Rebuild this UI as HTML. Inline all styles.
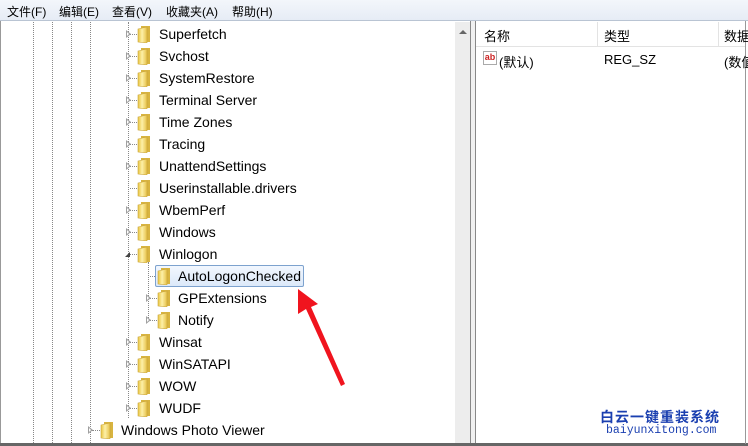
<!DOCTYPE html>
<html><head><meta charset="utf-8"><style>
*{margin:0;padding:0;box-sizing:border-box}
body{width:748px;height:446px;overflow:hidden;background:#fff;font-family:"Liberation Sans","Noto Sans CJK SC",sans-serif;position:relative}
.menu{position:absolute;left:0;top:0;width:748px;height:21px;background:linear-gradient(#f3f6fb,#e6ecf5);border-bottom:1px solid #b9c4d3;font-size:12px;color:#000}
.menu span{position:absolute;top:3px}
.t{position:absolute;font-size:14px;color:#000;white-space:nowrap}
.f{position:absolute;width:15px;height:18px}
.e{position:absolute;width:0;height:0;border-top:4px solid transparent;border-bottom:4px solid transparent;border-left:5px solid #a0a0a0}
.e:after{content:"";position:absolute;left:-4px;top:-2px;border-top:2px solid transparent;border-bottom:2px solid transparent;border-left:2px solid #fff}
.vl{position:absolute;width:0;border-left:1px dotted #888}
.hl{position:absolute;height:0;border-top:1px dotted #888}
</style></head><body>
<div class="menu"><span style="left:7px">文件(F)</span><span style="left:59px">编辑(E)</span><span style="left:112px">查看(V)</span><span style="left:166px">收藏夹(A)</span><span style="left:232px">帮助(H)</span></div>
<div style="position:absolute;left:0;top:21px;width:1px;height:423px;background:#999"></div>
<div style="position:absolute;left:455px;top:22px;width:15px;height:422px;background:#ededed"></div>
<div style="position:absolute;left:459px;top:30px;border-left:4px solid transparent;border-right:4px solid transparent;border-bottom:4px solid #666"></div>
<div style="position:absolute;left:470px;top:21px;width:1px;height:423px;background:#888"></div>
<div style="position:absolute;left:471px;top:21px;width:4px;height:423px;background:#f0f0f0"></div>
<div style="position:absolute;left:475px;top:21px;width:1px;height:423px;background:#888"></div>
<div style="position:absolute;left:0;top:443px;width:748px;height:3px;background:#666"></div>
<div style="position:absolute;left:745px;top:21px;width:1px;height:423px;background:#999"></div>
<div style="position:absolute;left:476px;top:46px;width:269px;height:1px;background:#e3e3e3"></div>
<div style="position:absolute;left:597px;top:22px;width:1px;height:24px;background:#e3e3e3"></div>
<div style="position:absolute;left:718px;top:22px;width:1px;height:24px;background:#e3e3e3"></div>
<div class="t" style="left:484px;top:26px;font-size:13px">名称</div>
<div class="t" style="left:604px;top:26px;font-size:13px">类型</div>
<div class="t" style="left:724px;top:26px;font-size:13px">数据</div>
<div style="position:absolute;left:483px;top:51px;width:14px;height:14px;border:1px solid #aaa;background:#fff;font-size:9px;font-weight:bold;color:#c22;line-height:11px;text-align:center">ab</div>
<div class="t" style="left:499px;top:52px;font-size:13px">(默认)</div>
<div class="t" style="left:604px;top:52px;font-size:13px">REG_SZ</div>
<div class="t" style="left:724px;top:52px;font-size:13px">(数值</div>
<div class="vl" style="left:33px;top:22px;height:421px"></div>
<div class="vl" style="left:52px;top:22px;height:421px"></div>
<div class="vl" style="left:71px;top:22px;height:421px"></div>
<div class="vl" style="left:90px;top:22px;height:421px"></div>
<div class="vl" style="left:128px;top:22px;height:396px"></div>
<div class="vl" style="left:148px;top:262px;height:58px"></div>
<svg width="0" height="0" style="position:absolute"><defs><linearGradient id="g" x1="0" x2="1"><stop offset="0" stop-color="#e8c440"/><stop offset=".45" stop-color="#fdf0a8"/><stop offset="1" stop-color="#e6c24a"/></linearGradient></defs></svg>
<div id="tree"></div>
<script>
var rows=[["Superfetch",0,1],["Svchost",0,1],["SystemRestore",0,1],["Terminal Server",0,1],["Time Zones",0,1],["Tracing",0,1],["UnattendSettings",0,1],["Userinstallable.drivers",0,0],["WbemPerf",0,1],["Windows",0,1],["Winlogon",0,2],["AutoLogonChecked",1,0],["GPExtensions",1,1],["Notify",1,1],["Winsat",0,1],["WinSATAPI",0,1],["WOW",0,1],["WUDF",0,1],["Windows Photo Viewer",-1,1]];
var h="";
rows.forEach(function(r,i){
var cy=34+i*22,ex,fx,tx;
if(r[1]==0){ex=128;fx=137;tx=159}else if(r[1]==1){ex=148;fx=157;tx=178}else{ex=90;fx=100;tx=121}
h+='<div class="hl" style="left:'+(ex+2)+'px;top:'+cy+'px;width:'+(fx-ex-2)+'px"></div>';
if(r[2]==1)h+='<div class="e" style="left:'+(ex-2)+'px;top:'+(cy-4)+'px"></div>';
if(r[2]==2)h+='<div style="position:absolute;left:'+(ex-3)+'px;top:'+(cy-2)+'px;border-left:5px solid transparent;border-bottom:5px solid #444"></div>';
if(i==11)h+='<div style="position:absolute;left:155px;top:'+(cy-11)+'px;width:149px;height:22px;border:1px solid #7da2ce;border-radius:2px;background:linear-gradient(#f2f7fe,#dce9f9)"></div>';
h+='<svg class="f" style="left:'+fx+'px;top:'+(cy-9)+'px" viewBox="0 0 15 18"><path d="M4 1h9v16H4z" fill="#d8b440"/><path d="M1 4l9-2v16l-9 -1z" fill="url(#g)" stroke="#c9a43a" stroke-width=".6"/></svg>';
h+='<div class="t" style="left:'+tx+'px;top:'+(cy-8)+'px">'+r[0]+'</div>';
});
document.getElementById("tree").innerHTML=h;
</script>
<svg style="position:absolute;left:0;top:0" width="748" height="446"><polygon points="298,289 318,304 311,307 345,384 341,386 306,309 298,314" fill="#f0141e"/></svg>
<div class="t" style="left:600px;top:407px;font-size:14px;font-weight:bold;color:#1a3fb0;letter-spacing:1px">白云一键重装系统</div>
<div class="t" style="left:606px;top:424px;font-size:11.5px;color:#1a3fb0;font-family:'Liberation Mono',monospace">baiyunxitong.com</div>
</body></html>
